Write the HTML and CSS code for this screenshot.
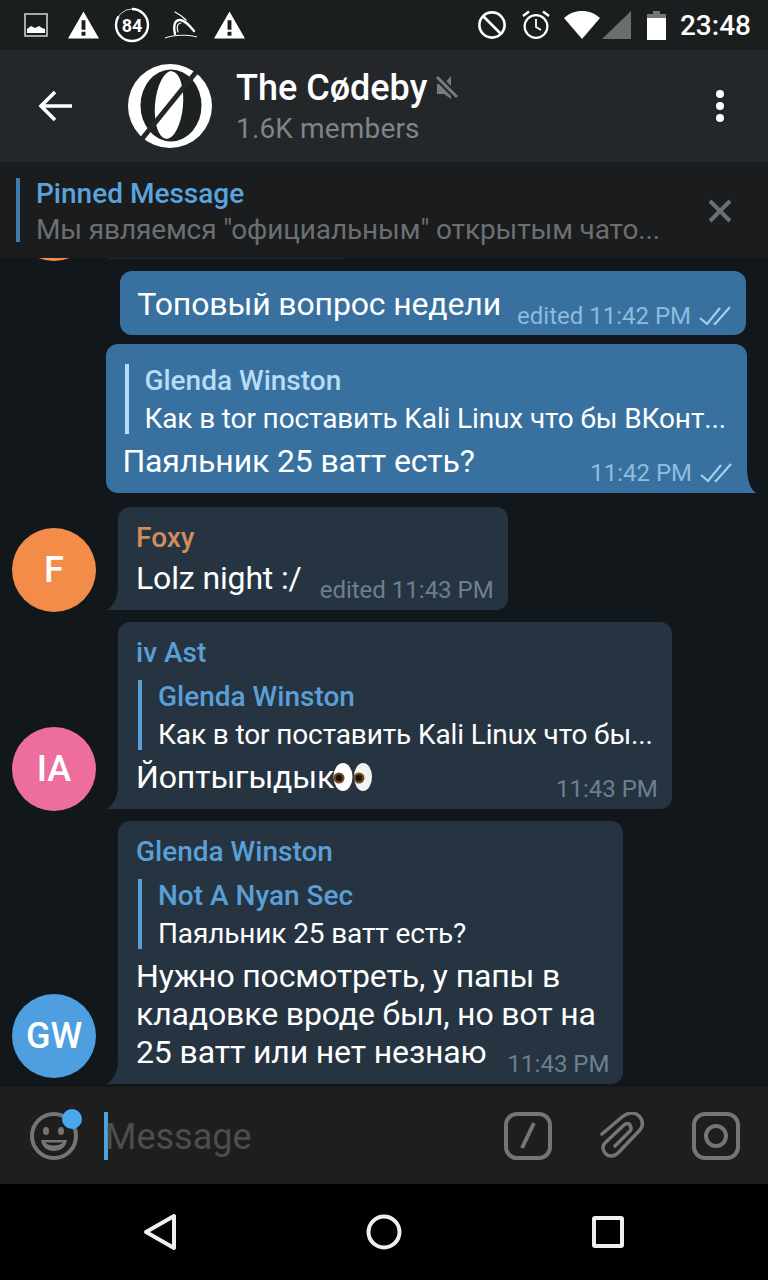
FILE: index.html
```html
<!DOCTYPE html>
<html lang="en">
<head>
  <meta charset="UTF-8" />
  <title>The Cødeby</title>
  <link rel="stylesheet" href="styles.css">
</head>
<body>
  <div class="status-bar">
    <div class="status-left">
      <svg class="first-ico" width="24" height="24" viewBox="0 0 24 24"><rect x="1" y="1" width="22" height="22" fill="none" stroke="#ccc" stroke-width="1.6"/><path d="M3 20v-4l4-3 4 2 4-2 3 2 3 1v4z" fill="#fff"/></svg>
      <svg width="31" height="28" viewBox="0 0 32 28"><path fill-rule="evenodd" d="M16 0 32 28H0zM14 9v10h4V9zM14 21v4h4v-4z" fill="#fff"/></svg>
      <svg width="36" height="36" viewBox="0 0 36 36"><circle cx="18" cy="18" r="16" fill="none" stroke="#fff" stroke-width=".8"/><circle cx="18" cy="18" r="16" fill="none" stroke="#fff" stroke-width="2.4" pathLength="100" stroke-dasharray="84 100" transform="rotate(-90 18 18)"/><text x="18" y="24.500" text-anchor="middle" class="battery-num">84</text></svg>
      <svg width="32" height="28" viewBox="0 0 32 28"><g fill="none" stroke="#fff" stroke-linecap="round"><path d="M10 23C8 14 10 9 15 9 20 9 25 15 29 20" stroke-width="2.400"/><path d="M13 21C11 15 13 12 16 12" stroke-width="1.200"/><path d="M10 1C14 3 18 6 21 9" stroke-width="1.300"/><path d="M0 27C8 24 22 23 32 26" stroke-width="1"/></g></svg>
      <svg class="last-ico" width="31" height="28" viewBox="0 0 32 28"><path fill-rule="evenodd" d="M16 0 32 28H0zM14 9v10h4V9zM14 21v4h4v-4z" fill="#fff"/></svg>
    </div>
    <div class="status-right">
      <svg width="30" height="30" viewBox="0 0 30 30"><g fill="none" stroke="#fff" stroke-width="2.600"><circle cx="15" cy="15" r="12.600"/><path d="M6 6l18 18"/></g></svg>
      <svg width="30" height="30" viewBox="0 0 30 30"><g fill="none" stroke="#fff" stroke-width="2.200"><circle cx="15" cy="16.500" r="11.400"/><path d="M15 9v8l5 3" stroke-width="1.800"/><path d="M2 6l6-4.500M28 6l-6-4.500" stroke-width="2.400"/></g></svg>
      <div class="signal">
        <svg width="36" height="28" viewBox="0 0 36 28"><path d="M18 28 0 7C5 2.500 11 0 18 0s13 2.500 18 7z" fill="#fff"/></svg>
        <svg width="29" height="28" viewBox="0 0 29 28"><path d="M29 0v28H0z" fill="#6b6e6e"/></svg>
      </div>
      <svg width="19" height="29" viewBox="0 0 19 29"><path d="M6 0h7v3h6v4H0V3h6z" fill="#777"/><path d="M0 7h19v22H0z" fill="#fff"/></svg>
      <span class="clock">23:48</span>
    </div>
  </div>

  <header class="topbar">
    <svg class="back" width="36" height="32" viewBox="0 0 36 32"><path d="M34 16H4M17 2 3 16l14 14" fill="none" stroke="#fff" stroke-width="3.600"/></svg>
    <svg class="logo" width="84" height="84" viewBox="0 0 84 84">
      <circle cx="42" cy="42" r="42" fill="#fff"/>
      <ellipse cx="43" cy="41.500" rx="30.500" ry="36" fill="#1d2122"/>
      <ellipse cx="41" cy="41" rx="14" ry="34" transform="rotate(5 41 41)" fill="#fff"/>
      <path d="M73 2 9 81" stroke="#23272a" stroke-width="5"/>
    </svg>
    <div class="chat-info">
      <div class="chat-title">The Cødeby
        <svg width="24" height="26" viewBox="0 0 24 26"><path d="M2 9h7l7-8v23l-7-5H2z" fill="#777b7b"/><path d="M1 1l22 22" stroke="#23272a" stroke-width="7"/><path d="M2 2l20 20" stroke="#777b7b" stroke-width="3"/></svg>
      </div>
      <div class="chat-sub">1.6K members</div>
    </div>
    <div class="menu-dots"><i></i><i></i><i></i></div>
  </header>

  <div class="pinned">
    <div class="pinned-text">
      <div class="pinned-title">Pinned Message</div>
      <div class="pinned-body">Мы являемся "официальным" открытым чато...</div>
    </div>
    <svg class="pinned-close" width="24" height="24" viewBox="0 0 24 24"><path d="M2 2l20 20M22 2 2 22" stroke="#6c7072" stroke-width="4"/></svg>
  </div>

  <main class="chat">
    <div class="peek"><div class="avatar orange"></div><div class="peek-bubble"></div></div>

    <div class="bubble out first">
      <div class="last-line">
        <span class="text">Топовый вопрос недели</span>
        <span class="meta">edited 11:42 PM <svg class="ticks" width="32" height="20" viewBox="0 0 32 20"><path d="M1 12l7 6L21 2M15 17l1 1L31 1" fill="none" stroke="currentColor" stroke-width="2.200"/></svg></span>
      </div>
    </div>

    <div class="bubble out tail-right">
      <div class="reply">
        <div class="reply-name">Glenda Winston</div>
        <div class="reply-text">Как в tor поставить Kali Linux что бы ВКонт...</div>
      </div>
      <div class="last-line">
        <span class="text">Паяльник 25 ватт есть?</span>
        <span class="meta">11:42 PM <svg class="ticks" width="32" height="20" viewBox="0 0 32 20"><path d="M1 12l7 6L21 2M15 17l1 1L31 1" fill="none" stroke="currentColor" stroke-width="2.200"/></svg></span>
      </div>
    </div>

    <div class="row foxy">
      <div class="avatar orange">F</div>
      <div class="bubble in">
        <div class="name name-orange">Foxy</div>
        <div class="last-line">
          <span class="text">Lolz night :/</span>
          <span class="meta">edited 11:43 PM</span>
        </div>
      </div>
    </div>

    <div class="row">
      <div class="avatar pink">IA</div>
      <div class="bubble in">
        <div class="name">iv Ast</div>
        <div class="reply">
          <div class="reply-name">Glenda Winston</div>
          <div class="reply-text">Как в tor поставить Kali Linux что бы...</div>
        </div>
        <div class="last-line">
          <span class="text">Йоптыгыдык<svg class="eyes" width="40" height="30" viewBox="0 0 40 30"><ellipse cx="10" cy="15" rx="9.500" ry="14" fill="#fff"/><ellipse cx="30" cy="15" rx="9" ry="14" fill="#f2f2f2"/><circle cx="6" cy="16" r="5.500" fill="#6e4a1c"/><circle cx="26" cy="16" r="5.500" fill="#6e4a1c"/><circle cx="6" cy="16" r="3.200" fill="#1e130a"/><circle cx="26" cy="16" r="3.200" fill="#1e130a"/></svg></span>
          <span class="meta">11:43 PM</span>
        </div>
      </div>
    </div>

    <div class="row glenda">
      <div class="avatar blue">GW</div>
      <div class="bubble in">
        <div class="name">Glenda Winston</div>
        <div class="reply">
          <div class="reply-name">Not A Nyan Sec</div>
          <div class="reply-text">Паяльник 25 ватт есть?</div>
        </div>
        <div class="text">Нужно посмотреть, у папы в</div>
        <div class="text">кладовке вроде был, но вот на</div>
        <div class="last-line">
          <span class="text">25 ватт или нет незнаю</span>
          <span class="meta">11:43 PM</span>
        </div>
      </div>
    </div>
  </main>

  <footer class="composer">
    <div class="emoji-btn">
      <svg width="48" height="48" viewBox="0 0 48 48"><circle cx="24" cy="24" r="22" fill="none" stroke="#757575" stroke-width="4"/><ellipse cx="16" cy="19" rx="3" ry="4" fill="#757575"/><ellipse cx="31" cy="19" rx="3" ry="4" fill="#757575"/><path d="M11 28h26c-1 7-6 11-13 11s-12-4-13-11z" fill="#757575"/><path d="M15 30.500h18c-2 2-5 3-9 3s-7-1-9-3z" fill="#1e1e1e"/></svg>
      <span class="emoji-dot"></span>
    </div>
    <span class="caret"></span>
    <span class="placeholder">Message</span>
    <div class="composer-icons">
      <svg width="48" height="48" viewBox="0 0 48 48"><rect x="2" y="2" width="44" height="44" rx="11" fill="none" stroke="#757575" stroke-width="4"/><path d="M30 11 18 36" stroke="#757575" stroke-width="4"/></svg>
      <svg width="48" height="48" viewBox="0 0 48 48"><path d="M4 22 24 5C30 0 37 0 41 4S46 14 41 19L21 40C17 45 11 45 8 42S3 34 8 30L26 13C28 11 31 11 32 13S34 17 32 19L17 34" fill="none" stroke="#757575" stroke-width="3.500" stroke-linecap="round"/></svg>
      <svg width="48" height="48" viewBox="0 0 48 48"><rect x="2" y="2" width="44" height="44" rx="11" fill="none" stroke="#757575" stroke-width="4"/><circle cx="24" cy="24" r="10" fill="none" stroke="#757575" stroke-width="4"/></svg>
    </div>
  </footer>

  <nav class="navbar">
    <svg width="34" height="38" viewBox="0 0 34 38"><path d="M31 3v32L3 19z" fill="none" stroke="#eee" stroke-width="4" stroke-linejoin="round"/></svg>
    <svg width="36" height="36" viewBox="0 0 36 36"><circle cx="18" cy="18" r="15.500" fill="none" stroke="#eee" stroke-width="4"/></svg>
    <svg width="32" height="32" viewBox="0 0 32 32"><rect x="2" y="2" width="28" height="28" rx="1" fill="none" stroke="#eee" stroke-width="4"/></svg>
  </nav>
</body>
</html>
```

FILE: styles.css
```css
* { box-sizing: border-box; margin: 0; padding: 0; }

body {
  width: 768px;
  height: 1280px;
  overflow: hidden;
  display: flex;
  flex-direction: column;
  background: #11171b;
  font-family: Roboto, "Noto Sans", sans-serif;
  color: #fff;
}

svg { display: block; flex: none; }

.status-bar {
  height: 50px;
  flex: none;
  display: flex;
  align-items: center;
  justify-content: space-between;
  padding: 0 17px 0 24px;
  background: #1b1e1f;
}

.status-left { display: flex; align-items: center; gap: 15px; }
.first-ico { margin-right: 5px; }
.last-ico { margin-left: 2px; }
.status-right { display: flex; align-items: center; gap: 14px; }
.battery-num { font-size: 18px; font-weight: 700; fill: #fff; }
.signal { display: flex; margin-left: -1px; margin-right: 2px; }
.signal svg:first-child { margin-right: 2px; }
.clock { font-size: 28px; font-weight: 500; padding-top: 1px; }

.topbar {
  height: 113px;
  flex: none;
  display: flex;
  align-items: center;
  padding: 0 36px 0 38px;
  background: #23272a;
  border-bottom: 1px solid #1a1d1f;
}

.logo { margin-left: 54px; }
.chat-info { flex: 1; margin-left: 24px; }

.chat-title {
  display: flex;
  align-items: center;
  gap: 8px;
  font-size: 36px;
  line-height: 42px;
  font-weight: 500;
}

.chat-sub {
  font-size: 28px;
  line-height: 34px;
  margin-top: 3px;
  letter-spacing: .15px;
  color: #7f8487;
}

.menu-dots { display: flex; flex-direction: column; gap: 4px; margin-right: 8px; }
.menu-dots i { width: 8px; height: 8px; border-radius: 50%; background: #fff; }

.pinned {
  height: 95px;
  flex: none;
  display: flex;
  align-items: center;
  justify-content: space-between;
  padding: 0 36px 0 16px;
  background: #1b1c1d;
}

.pinned-text { border-left: 4px solid #3f7cae; padding-left: 16px; height: 64px; margin-bottom: 2px; }
.pinned-title { font-size: 28px; line-height: 32px; font-weight: 500; color: #5ba3dc; }
.pinned-body { font-size: 28px; line-height: 36px; margin-top: 2px; letter-spacing: -.12px; color: #6b6f72; }

.chat { flex: 1; min-height: 0; overflow: hidden; }

.peek { height: 3px; overflow: hidden; display: flex; padding-left: 12px; }
.peek .avatar { margin-top: -81px; }
.peek-bubble { width: 234px; height: 1px; margin-left: -10px; background: #1e2830; }

.row { display: flex; align-items: flex-end; padding-left: 12px; margin-top: 12px; }
.foxy { margin-top: 14px; }

.avatar {
  width: 84px;
  height: 84px;
  flex: none;
  border-radius: 50%;
  margin-bottom: -2px;
  margin-right: 22px;
  display: flex;
  align-items: center;
  justify-content: center;
  font-size: 36px;
  font-weight: 500;
}

.glenda .avatar { margin-bottom: 6px; }
.orange { background: #f28c48; }
.pink { background: #ed6d9c; }
.blue { background: #4f9fe0; }

.bubble { position: relative; width: fit-content; border-radius: 12px; padding: 12px 14px 13px 18px; }
.in { background: #263442; border-bottom-left-radius: 0; }
.out { background: #38719f; margin-left: auto; margin-right: 22px; }
.first { margin-top: 10px; padding: 14px 15px 12px 17px; }
.first .last-line { gap: 16px; }
.tail-right { margin-top: 9px; margin-right: 21px; padding: 20px 15px 13px 18px; border-bottom-right-radius: 0; }

/* little curved tail at the corner of a bubble */
.in::before, .tail-right::after {
  content: "";
  position: absolute;
  bottom: 0;
  width: 12px;
  height: 24px;
  background: inherit;
}
.in::before { left: -12px; clip-path: path("M12 0V24H0C6 22 12 13 12 0Z"); }
.tail-right::after { right: -10px; width: 10px; height: 26px; clip-path: path("M0 0V26H10C4 24 0 14 0 0Z"); }

.name { font-size: 28px; line-height: 38px; font-weight: 500; color: #5a9fd6; }
.name-orange { color: #d08b5f; margin-bottom: 2px; }

.reply { margin: 8px 5px 8px 2px; padding-left: 16px; border-left: 4px solid #5a9fd6; }
.reply-name { font-size: 28px; line-height: 34px; margin-bottom: 5px; font-weight: 500; color: #5a9fd6; }
.reply-text { font-size: 28px; line-height: 31px; letter-spacing: -.13px; color: #fff; }
.out .reply { margin: 0 6px 8px 1px; padding-left: 15px; border-color: #b7dcf5; }
.out .reply-name { color: #b7dcf5; }

.text { font-size: 32px; line-height: 38px; letter-spacing: -.14px; }
.last-line { display: flex; align-items: flex-end; justify-content: space-between; gap: 17px; }
.in .last-line { gap: 18px; }
.glenda .last-line { gap: 21px; }
.last-line .text { display: flex; align-items: center; }
.eyes { margin-left: -1px; }
.tail-right .last-line { margin-left: -2px; }

.meta {
  display: flex;
  align-items: center;
  gap: 2px;
  white-space: pre;
  font-size: 24px;
  line-height: 30px;
  color: #6d7f90;
  margin-bottom: -8px;
}

.out .meta { color: #8fbbde; }
.out .meta .ticks { color: #a5cfee; }

.composer {
  height: 97px;
  flex: none;
  display: flex;
  align-items: center;
  padding: 0 28px 0 30px;
  background: #1e1e1e;
}

.emoji-btn { position: relative; width: 48px; height: 48px; }
.emoji-dot { position: absolute; top: -3px; left: 32px; width: 20px; height: 20px; border-radius: 50%; background: #4aa8ec; }
.caret { width: 4px; height: 48px; margin-left: 26px; background: #4aa3e3; }
.placeholder { flex: 1; font-size: 36px; color: #4d4d4d; margin-left: -3px; padding-top: 3px; }
.composer-icons { display: flex; gap: 46px; }

.navbar {
  height: 96px;
  flex: none;
  display: flex;
  align-items: center;
  background: #000;
  padding-left: 143px;
}

.navbar svg:nth-child(2) { margin-left: 189px; }
.navbar svg:nth-child(3) { margin-left: 190px; }
```
